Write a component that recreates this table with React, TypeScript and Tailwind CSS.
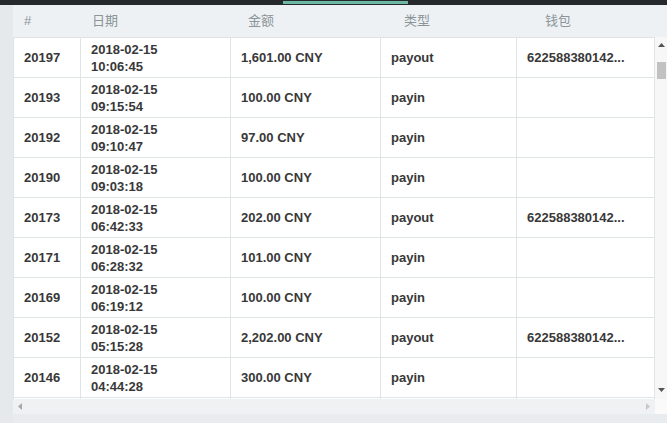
import React from "react";

type Row = {
  id: string;
  date: string;
  time: string;
  amount: string;
  type: string;
  wallet: string;
};

const rows: Row[] = [
  { id: "20197", date: "2018-02-15", time: "10:06:45", amount: "1,601.00 CNY", type: "payout", wallet: "622588380142..." },
  { id: "20193", date: "2018-02-15", time: "09:15:54", amount: "100.00 CNY", type: "payin", wallet: "" },
  { id: "20192", date: "2018-02-15", time: "09:10:47", amount: "97.00 CNY", type: "payin", wallet: "" },
  { id: "20190", date: "2018-02-15", time: "09:03:18", amount: "100.00 CNY", type: "payin", wallet: "" },
  { id: "20173", date: "2018-02-15", time: "06:42:33", amount: "202.00 CNY", type: "payout", wallet: "622588380142..." },
  { id: "20171", date: "2018-02-15", time: "06:28:32", amount: "101.00 CNY", type: "payin", wallet: "" },
  { id: "20169", date: "2018-02-15", time: "06:19:12", amount: "100.00 CNY", type: "payin", wallet: "" },
  { id: "20152", date: "2018-02-15", time: "05:15:28", amount: "2,202.00 CNY", type: "payout", wallet: "622588380142..." },
  { id: "20146", date: "2018-02-15", time: "04:44:28", amount: "300.00 CNY", type: "payin", wallet: "" },
];

const cols = "grid grid-cols-[67px_150px_150px_136px_138px]";
const cell = "border-r border-[#dfe4e7]";

export default function App() {
  return (
    <div className="w-[667px] h-[423px] overflow-hidden bg-[#e8ebed] font-['Liberation_Sans','Noto_Sans_CJK_SC',sans-serif] flex flex-col">
      {/* top nav strip */}
      <div className="h-[5px] bg-[#26292b] shrink-0 flex">
        <div className="ml-[283px] mt-[1px] w-[125px] h-[3px] bg-[#6db8a2]" />
      </div>

      <div className="flex flex-1 min-h-0">
        <div className="w-[13px] shrink-0 bg-[#e6e9eb]" />
        <div className="flex-1 flex flex-col bg-[#eef1f3]">
          {/* header */}
          <div className="h-[32px] shrink-0 grid grid-cols-[68px_156px_156px_141px_1fr] items-center text-[13px] text-[#8a9499]">
            <div className="pl-[11px]">#</div>
            <div className="pl-[11px]">日期</div>
            <div className="pl-[11px]">金额</div>
            <div className="pl-[11px]">类型</div>
            <div className="pl-[11px]">钱包</div>
          </div>

          {/* body + vertical scrollbar */}
          <div className="flex h-[362px] shrink-0">
            <div className="w-[642px] overflow-hidden bg-white border-t border-l border-[#dde3e6]">
              {rows.map((r) => (
                <div key={r.id} className={`${cols} h-[40px] border-b border-[#dfe4e7] text-[13px] font-bold text-[#383838] leading-[17px]`}>
                  <div className={`flex items-center pl-[10px] ${cell}`}>{r.id}</div>
                  <div className={`flex flex-col justify-center pl-[10px] ${cell}`}>
                    <span>{r.date}</span>
                    <span>{r.time}</span>
                  </div>
                  <div className={`flex items-center pl-[10px] ${cell}`}>{r.amount}</div>
                  <div className={`flex items-center pl-[10px] ${cell}`}>{r.type}</div>
                  <div className={`flex items-center pl-[10px] truncate ${cell}`}>{r.wallet}</div>
                </div>
              ))}
              {/* next row, mostly hidden below the fold */}
              <div className={`${cols} h-[40px]`}>
                <div className={cell} />
                <div className={cell} />
                <div className={cell} />
                <div className={cell} />
                <div className={cell} />
              </div>
            </div>
            <div className="w-[12px] bg-[#f7f7f7] flex flex-col items-center">
              <svg width="7" height="4" viewBox="0 0 7 4" className="mt-[6px]">
                <path d="M0 4 L3.5 0 L7 4 Z" fill="#555" />
              </svg>
              <div className="mt-[15px] w-[9px] h-[17px] bg-[#c1c1c1]" />
              <div className="flex-1" />
              <svg width="7" height="4" viewBox="0 0 7 4" className="mb-[7px]">
                <path d="M0 0 L7 0 L3.5 4 Z" fill="#555" />
              </svg>
            </div>
          </div>

          {/* horizontal scrollbar */}
          <div className="h-[15px] shrink-0 flex">
            <div className="w-[642px] bg-[#eff1f2] flex items-center justify-between px-[5px]">
              <svg width="4" height="7" viewBox="0 0 4 7">
                <path d="M4 0 L0 3.5 L4 7 Z" fill="#a9a9a9" />
              </svg>
              <svg width="4" height="7" viewBox="0 0 4 7">
                <path d="M0 0 L4 3.5 L0 7 Z" fill="#c8c8c8" />
              </svg>
            </div>
            <div className="w-[12px] bg-[#fafafa]" />
          </div>

          <div className="flex-1 bg-[#e9ecee]" />
        </div>
      </div>
    </div>
  );
}
